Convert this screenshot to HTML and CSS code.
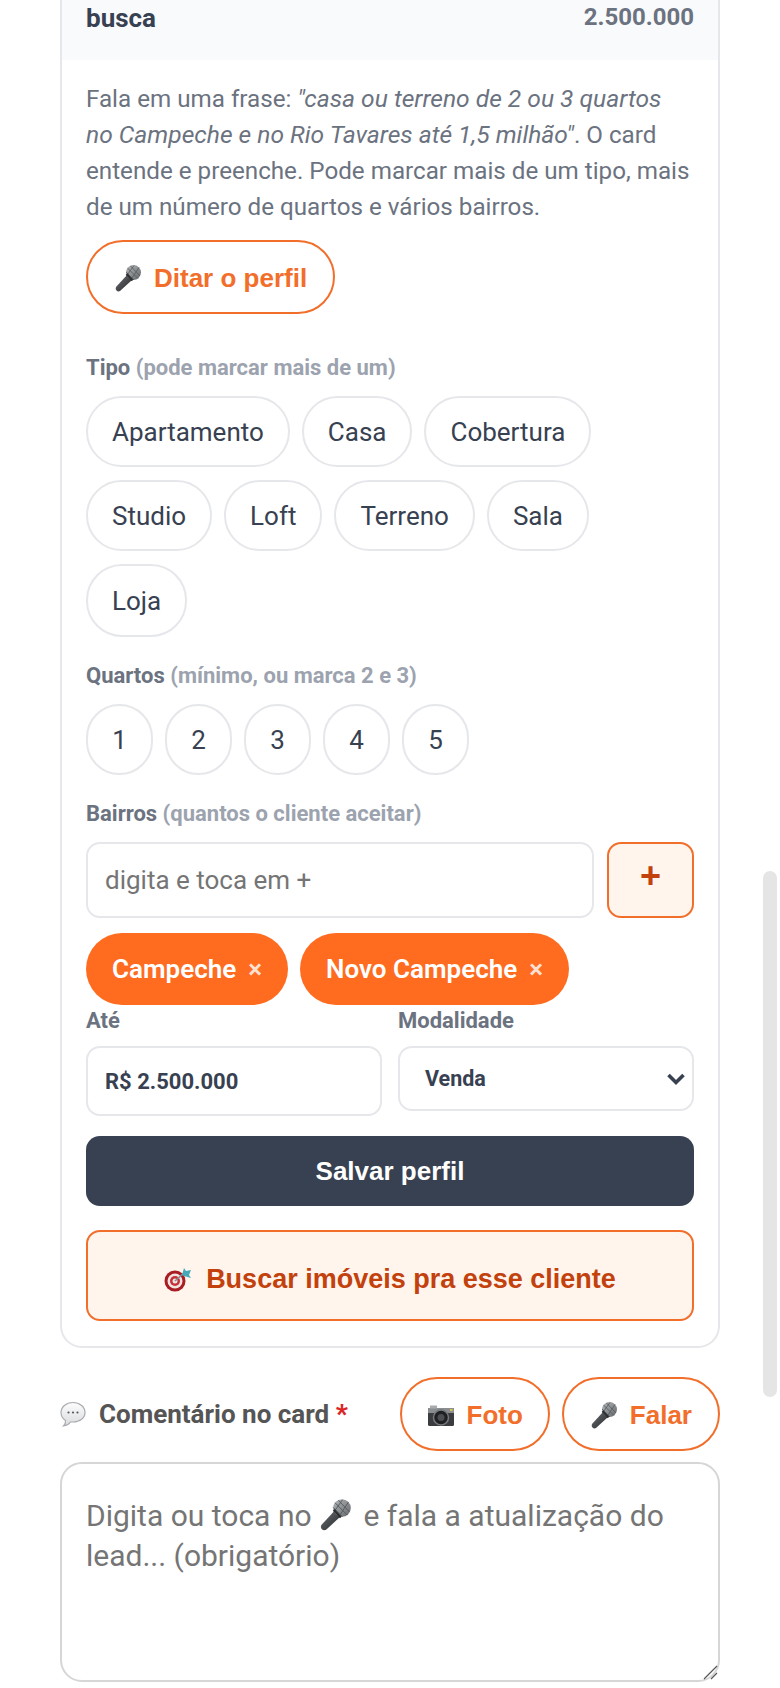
FILE: index.html
```html
<!DOCTYPE html>
<html lang="pt-BR">
<head>
    <meta charset="UTF-8">
    <meta name="viewport" content="width=device-width, initial-scale=1.0">
    <title>Perfil de busca</title>
    <link rel="stylesheet" href="styles.css">
</head>
<body>
    <svg class="defs" width="0" height="0" aria-hidden="true">
        <defs>
            <linearGradient id="micHead" x1="0" y1="0" x2="1" y2="1">
                <stop offset="0" stop-color="#b5b8bb"/>
                <stop offset="1" stop-color="#63676a"/>
            </linearGradient>
            <linearGradient id="micBody" x1="0" y1="0" x2="1" y2="1">
                <stop offset="0" stop-color="#6d7073"/>
                <stop offset="1" stop-color="#26282a"/>
            </linearGradient>
            <linearGradient id="bubbleFill" x1="0" y1="0" x2="0" y2="1">
                <stop offset="0" stop-color="#fdfdfd"/>
                <stop offset="1" stop-color="#d9dbde"/>
            </linearGradient>
            <symbol id="mic" viewBox="0 0 28 28">
                <path d="M13 11 L18 16 L6 27 Q4 28 2.500 26.500 Q1 25 2 23 Z" fill="url(#micBody)"/>
                <circle cx="19.500" cy="8.500" r="7.500" fill="url(#micHead)"/>
                <path d="M13.500 4 L24 14.500 M16.500 2 L26 12 M12 8 L20 16 M20 1.500 L12.500 12 M25 3.500 L17 15.500" stroke="#56595c" stroke-width=".8" fill="none"/>
                <path d="M12.500 10 L18.500 16.500" stroke="#2c2e30" stroke-width="2"/>
            </symbol>
        </defs>
    </svg>

    <main class="page">
        <section class="card">
            <div class="card-head">
                <span class="head-title">busca</span>
                <span class="head-value">2.500.000</span>
            </div>
            <div class="card-body">
                <p class="hint">Fala em uma frase: <em>"casa ou terreno de 2 ou 3 quartos<br>no Campeche e no Rio Tavares até 1,5 milhão"</em>. O card entende e preenche. Pode marcar mais de um tipo, mais de um número de quartos e vários bairros.</p>

                <button class="btn-voice btn-dictate" type="button">
                    <svg class="emoji"><use href="#mic"/></svg>
                    Ditar o perfil
                </button>

                <div class="field-label first">Tipo <span>(pode marcar mais de um)</span></div>
                <div class="chips">
                    <button class="chip" type="button">Apartamento</button>
                    <button class="chip" type="button">Casa</button>
                    <button class="chip" type="button">Cobertura</button>
                    <button class="chip" type="button">Studio</button>
                    <button class="chip" type="button">Loft</button>
                    <button class="chip" type="button">Terreno</button>
                    <button class="chip" type="button">Sala</button>
                    <button class="chip chip-tall" type="button">Loja</button>
                </div>

                <div class="field-label">Quartos <span>(mínimo, ou marca 2 e 3)</span></div>
                <div class="chips">
                    <button class="chip chip-num" type="button">1</button>
                    <button class="chip chip-num" type="button">2</button>
                    <button class="chip chip-num" type="button">3</button>
                    <button class="chip chip-num" type="button">4</button>
                    <button class="chip chip-num" type="button">5</button>
                </div>

                <div class="field-label">Bairros <span>(quantos o cliente aceitar)</span></div>
                <div class="add-row">
                    <input class="text-input" type="text" placeholder="digita e toca em +">
                    <button class="btn-add" type="button">+</button>
                </div>
                <div class="tags">
                    <span class="tag">Campeche <i>×</i></span>
                    <span class="tag">Novo Campeche <i>×</i></span>
                </div>

                <div class="two-cols">
                    <div class="col">
                        <label class="small-label">Até</label>
                        <input class="value-input" type="text" value="R$ 2.500.000">
                    </div>
                    <div class="col">
                        <label class="small-label">Modalidade</label>
                        <div class="select-box">
                            <span>Venda</span>
                            <svg class="select-arrow" viewBox="0 0 20 14"><path d="M2.500 3 L10 10.500 L17.500 3" fill="none" stroke="#374151" stroke-width="3.600"/></svg>
                        </div>
                    </div>
                </div>

                <button class="btn-save" type="button">Salvar perfil</button>
                <button class="btn-search" type="button">
                    <svg class="emoji emoji-target" viewBox="0 0 28 26">
                        <circle cx="11" cy="15" r="10.500" fill="#a81c24"/>
                        <circle cx="11" cy="15" r="7.500" fill="#f1e4e0"/>
                        <circle cx="11" cy="15" r="5" fill="#c5303a"/>
                        <circle cx="11" cy="15" r="2.500" fill="#f1e4e0"/>
                        <path d="M11 15 L21 6" stroke="#8a8f8f" stroke-width="1.600"/>
                        <path d="M18 9 L20 2 L22 5 L27 4 L25 9 L27 12 L20 10 Z" fill="#45a9b8"/>
                    </svg>
                    Buscar imóveis pra esse cliente
                </button>
            </div>
        </section>

        <div class="comment-head">
            <div class="comment-title">
                <svg class="emoji emoji-bubble" viewBox="0 0 26 26">
                    <path d="M13 1.500 C20 1.500 25 6 25 11.500 C25 17 20 21 13 21 L10.500 21 Q8 24.500 3.500 25 Q6 22.500 5.500 19.500 C2.500 17.500 1 14.500 1 11.500 C1 6 6 1.500 13 1.500 Z" fill="url(#bubbleFill)" stroke="#a9acb0" stroke-width="1.200"/>
                    <circle cx="8.500" cy="11.500" r="1.100" fill="#55585c"/>
                    <circle cx="13" cy="11.500" r="1.100" fill="#55585c"/>
                    <circle cx="17.500" cy="11.500" r="1.100" fill="#55585c"/>
                </svg>
                <span>Comentário no card <b>*</b></span>
            </div>
            <div class="comment-actions">
                <button class="btn-voice btn-small btn-photo" type="button">
                    <svg class="emoji emoji-camera" viewBox="0 0 28 24">
                        <rect x="1" y="5" width="26" height="18" rx="1.500" fill="#3a3c3f"/>
                        <rect x="1" y="5" width="26" height="5" fill="#8b8e91"/>
                        <rect x="3" y="2.500" width="7" height="3" fill="#a9acaf"/>
                        <circle cx="14" cy="14.500" r="7.500" fill="#1f2022" stroke="#77797c" stroke-width="1.500"/>
                        <circle cx="14" cy="14.500" r="3.500" fill="#4b4e52"/>
                        <rect x="23" y="6" width="2.500" height="2" fill="#d8c24a"/>
                    </svg>
                    Foto
                </button>
                <button class="btn-voice btn-small" type="button">
                    <svg class="emoji"><use href="#mic"/></svg>
                    Falar
                </button>
            </div>
        </div>

        <div class="comment-box">
            <div class="comment-placeholder">Digita ou toca no <svg class="emoji emoji-inline"><use href="#mic"/></svg> e fala a atualização do lead... (obrigatório)</div>
            <svg class="grip" viewBox="0 0 16 16"><path d="M2 15 L15 2 M9 15 L15 9" stroke="#555" stroke-width="1.200" fill="none"/></svg>
        </div>
    </main>

    <div class="scroll-thumb"></div>
</body>
</html>
```

FILE: styles.css
```css
* {
    box-sizing: border-box;
}

body {
    margin: 0;
    background: #fff;
    font-family: Roboto, "Noto Sans", sans-serif;
    color: #374151;
    height: 1688px;
    overflow: hidden;
}

button {
    cursor: pointer;
}

.defs {
    position: absolute;
}

.page {
    padding: 0 60px;
}

.card {
    border: 2px solid #e5e7eb;
    border-top: none;
    border-radius: 0 0 22px 22px;
}

.card-head {
    display: flex;
    justify-content: space-between;
    height: 60px;
    padding: 2px 24px 0;
    background: #f9fafb;
}

.head-title {
    font-size: 26px;
    font-weight: 700;
    line-height: 32px;
}

.head-value {
    font-size: 24px;
    font-weight: 700;
    line-height: 30px;
    color: #6b7280;
}

.card-body {
    padding: 21px 24px 25px;
}

.hint {
    margin: 0;
    font-size: 24.200px;
    line-height: 36px;
    color: #6b7280;
}

.hint em {
    font-size: 24.600px;
}

.emoji {
    width: 28px;
    height: 28px;
    flex: none;
}

.btn-voice {
    display: inline-flex;
    align-items: center;
    gap: 12px;
    padding-top: 3px;
    border: 2px solid #f26e2b;
    border-radius: 37px;
    background: #fff;
    color: #f26e2b;
    font-family: "Liberation Sans", Arial, sans-serif;
    font-weight: 700;
    font-size: 26px;
}

.btn-dictate {
    height: 74px;
    margin-top: 15px;
    padding-left: 26px;
    padding-right: 26px;
}

.field-label {
    margin: 25px 0 14px;
    font-size: 22px;
    line-height: 28px;
    font-weight: 700;
    color: #6b7280;
}

.field-label.first {
    margin-top: 40px;
}

.field-label span {
    color: #9ca3af;
}

.chips {
    display: flex;
    flex-wrap: wrap;
    gap: 13px 12px;
}

.chip {
    height: 71px;
    padding: 0 24px;
    border: 2px solid #e5e7eb;
    border-radius: 36px;
    background: #fff;
    color: #374151;
    font-family: Roboto, sans-serif;
    font-size: 26px;
}

.chip-tall {
    height: 73px;
}

.chip-num {
    width: 67px;
    padding: 0;
}

.add-row {
    display: flex;
    gap: 13px;
}

.text-input {
    flex: 1;
    min-width: 0;
    height: 76px;
    padding: 0 17px;
    border: 2px solid #e5e7eb;
    border-radius: 14px;
    font-family: Roboto, sans-serif;
    font-size: 26px;
    color: #374151;
}

.text-input::placeholder {
    color: #757575;
}

.btn-add {
    width: 87px;
    height: 76px;
    padding: 0 0 8px;
    border: 2px solid #f26e2b;
    border-radius: 14px;
    background: #fff5ec;
    color: #c2410c;
    font-family: "Liberation Sans", Arial, sans-serif;
    font-size: 36px;
    font-weight: 700;
}

.tags {
    display: flex;
    gap: 12px;
    margin-top: 15px;
}

.tag {
    display: flex;
    align-items: center;
    gap: 12px;
    height: 72px;
    padding: 0 26px;
    border-radius: 36px;
    background: #ff6b1f;
    color: #fff;
    font-size: 26px;
    font-weight: 600;
}

.tag i {
    font-style: normal;
    font-size: 26px;
    opacity: .8;
}

.two-cols {
    display: grid;
    grid-template-columns: 296px 296px;
    gap: 16px;
    margin-top: 1px;
}

.small-label {
    display: block;
    height: 40px;
    font-size: 22px;
    font-weight: 700;
    line-height: 30px;
    color: #6b7280;
}

.value-input {
    display: block;
    width: 100%;
    height: 70px;
    padding: 0 17px;
    border: 2px solid #e5e7eb;
    border-radius: 14px;
    font-family: Roboto, sans-serif;
    font-size: 22px;
    font-weight: 700;
    color: #374151;
}

.select-box {
    display: flex;
    align-items: center;
    justify-content: space-between;
    height: 65px;
    padding: 0 6px 0 25px;
    border: 2px solid #e5e7eb;
    border-radius: 14px;
    font-size: 21.500px;
    font-weight: 700;
}

.select-arrow {
    width: 20px;
    height: 14px;
}

.btn-save {
    display: block;
    width: 100%;
    height: 70px;
    margin-top: 20px;
    border: none;
    border-radius: 14px;
    background: #374151;
    color: #fff;
    font-family: "Liberation Sans", Arial, sans-serif;
    font-size: 26px;
    font-weight: 700;
}

.btn-search {
    display: flex;
    align-items: center;
    justify-content: center;
    gap: 14px;
    width: 100%;
    height: 91px;
    margin-top: 24px;
    padding-top: 8px;
    border: 2px solid #f26e2b;
    border-radius: 14px;
    background: #fff5ec;
    color: #c2410c;
    font-family: "Liberation Sans", Arial, sans-serif;
    font-size: 27px;
    font-weight: 700;
}

.emoji-target {
    height: 26px;
}

.comment-head {
    display: flex;
    align-items: center;
    justify-content: space-between;
    margin-top: 29px;
}

.comment-title {
    display: flex;
    align-items: center;
    gap: 13px;
    font-size: 26px;
    font-weight: 700;
    color: #555;
}

.comment-title b {
    color: #dc2626;
}

.emoji-bubble {
    width: 26px;
    height: 26px;
}

.comment-actions {
    display: flex;
    gap: 12px;
}

.btn-small {
    height: 74px;
    padding-left: 26px;
    padding-right: 26px;
}

.btn-photo {
    padding-left: 25px;
    padding-right: 25px;
}

.emoji-camera {
    height: 24px;
}

.comment-box {
    position: relative;
    height: 220px;
    margin-top: 11px;
    padding: 32px 24px;
    border: 2px solid #d6d6d6;
    border-radius: 22px;
}

.comment-placeholder {
    font-size: 30px;
    line-height: 40px;
    color: #757575;
}

.emoji-inline {
    width: 33px;
    height: 33px;
    margin: 0 4px 0 0;
    vertical-align: -5px;
}

.grip {
    position: absolute;
    right: 0;
    bottom: 0;
    width: 16px;
    height: 16px;
}

.scroll-thumb {
    position: fixed;
    top: 871px;
    right: 3px;
    width: 14px;
    height: 526px;
    border-radius: 7px;
    background: #e5e5e5;
}
```
